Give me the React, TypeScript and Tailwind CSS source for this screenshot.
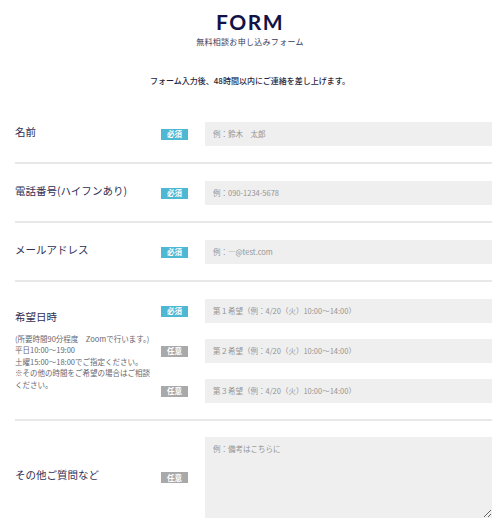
import React from "react";

const jp = "font-['Noto_Sans_CJK_JP','Noto_Sans',sans-serif]";

function Badge({ required }: { required: boolean }) {
  return (
    <span
      className={`flex h-[11px] w-[27px] shrink-0 items-center justify-center text-[7.5px] leading-none font-bold text-white ${
        required ? "bg-[#4cb8d3]" : "bg-[#a9a9a9]"
      }`}
    >
      {required ? "必須" : "任意"}
    </span>
  );
}

function Field({ placeholder }: { placeholder: string }) {
  return (
    <div className="ml-[17px] flex h-[24px] flex-1 items-center bg-[#efefef] pl-[8px] text-[7.5px] text-[#949494]">
      {placeholder}
    </div>
  );
}

function Row({ label, placeholder }: { label: string; placeholder: string }) {
  return (
    <div className="flex items-center border-b-2 border-[#e8e8e8] pt-[17px] pb-[16px]">
      <div className="-mt-[3px] w-[146px] shrink-0 text-[10.5px] leading-none text-[#2f2f55]">{label}</div>
      <Badge required />
      <Field placeholder={placeholder} />
    </div>
  );
}

export default function App() {
  return (
    <div className={`min-h-[521px] w-[500px] overflow-hidden bg-white ${jp}`}>
      {/* Header */}
      <div className="flex flex-col items-center pt-[11px]">
        <h1 className="font-['Lato',sans-serif] text-[21px] leading-[21px] font-bold tracking-[1.5px] text-[#121247]">
          FORM
        </h1>
        <p className="mt-[6px] text-[8px] leading-none tracking-[0.3px] text-[#3a3a5c]">無料相談お申し込みフォーム</p>
        <p className="mt-[31px] text-[8px] leading-none font-medium text-[#1f1f40]">
          フォーム入力後、48時間以内にご連絡を差し上げます。
        </p>
      </div>

      {/* Form */}
      <div className="mt-[20px] pl-[15px] pr-[8px]">
        <Row label="名前" placeholder="例：鈴木　太郎" />
        <Row label="電話番号(ハイフンあり)" placeholder="例：090-1234-5678" />
        <Row label="メールアドレス" placeholder="例：―@test.com" />

        <div className="flex items-center border-b-2 border-[#e8e8e8] pt-[17px] pb-[16px]">
          <div className="w-[146px] shrink-0 text-[#2f2f55]">
            <div className="text-[10.5px] leading-none">希望日時</div>
            <p className="mt-[10px] text-[7.5px] leading-[11.5px] text-[#666672]">
              (所要時間90分程度　Zoomで行います。)
              <br />
              平日10:00〜19:00
              <br />
              土曜15:00〜18:00でご指定ください。
              <br />
              ※その他の時間をご希望の場合はご相談
              <br />
              ください。
            </p>
          </div>
          <div className="flex flex-1 flex-col gap-[16px]">
            <div className="flex items-center">
              <Badge required />
              <Field placeholder="第１希望（例：4/20（火）10:00〜14:00）" />
            </div>
            <div className="flex items-center">
              <Badge required={false} />
              <Field placeholder="第２希望（例：4/20（火）10:00〜14:00）" />
            </div>
            <div className="flex items-center">
              <Badge required={false} />
              <Field placeholder="第３希望（例：4/20（火）10:00〜14:00）" />
            </div>
          </div>
        </div>

        <div className="flex items-center pt-[16px]">
          <div className="-mt-[5px] w-[146px] shrink-0 text-[10.5px] leading-none text-[#2f2f55]">その他ご質問など</div>
          <Badge required={false} />
          <textarea
            placeholder="例：備考はこちらに"
            className="ml-[17px] h-[81px] flex-1 resize-y bg-[#efefef] px-[8px] pt-[6px] text-[7.5px] text-[#555] outline-none placeholder:text-[#949494]"
          />
        </div>
      </div>
    </div>
  );
}
